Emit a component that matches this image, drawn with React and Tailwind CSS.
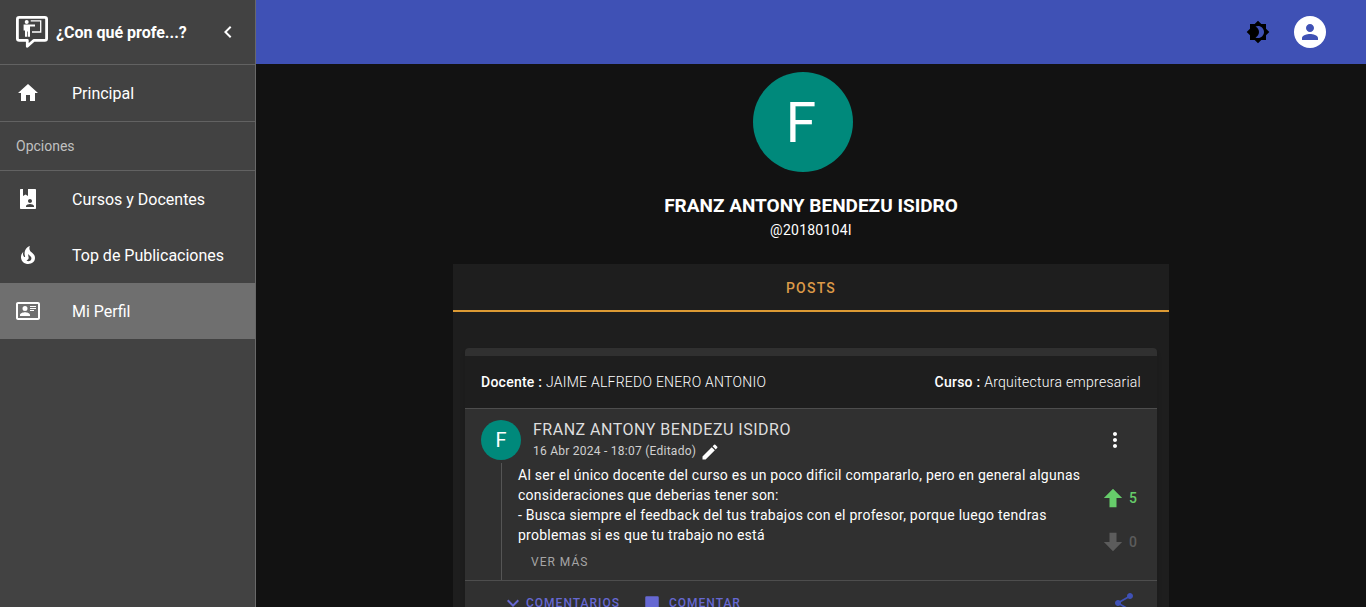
import { MdHome, MdBrightness4, MdPerson, MdEdit, MdMoreVert, MdShare, MdChevronLeft } from "react-icons/md";

function Icon({ d, className }) {
  return (
    <svg viewBox="0 0 24 24" fill="currentColor" aria-hidden="true" className={className}>
      <path d={d} />
    </svg>
  );
}

const bookAccount =
  "M19 2H12V9L9.5 7.5L7 9V2H5C4.4 2 4 2.4 4 3V21C4 21.6 4.4 22 5 22H19C19.6 22 20 21.6 20 21V3C20 2.4 19.6 2 19 2M14 12C15.1 12 16 12.9 16 14S15.1 16 14 16 12 15.1 12 14 12.9 12 14 12M18 20H10V19C10 17.67 12.67 17 14 17S18 17.67 18 19V20Z";
const cardAccount =
  "M22 3H2C.91 3.04.04 3.91 0 5V19C.04 20.09.91 20.96 2 21H22C23.09 20.96 23.96 20.09 24 19V5C23.96 3.91 23.09 3.04 22 3M22 19H2V5H22V19M14 17V15.75C14 14.09 10.66 13.25 9 13.25S4 14.09 4 15.75V17H14M9 7A2.5 2.5 0 1 0 9 12A2.5 2.5 0 0 0 9 7M14 7V8H20V7H14M14 9V10H20V9H14M14 11V12H18V11H14Z";
const fire =
  "M17.66 11.2C17.43 10.9 17.15 10.64 16.89 10.38C16.22 9.78 15.46 9.35 14.82 8.72C13.33 7.26 13 4.85 13.95 3C13 3.23 12.17 3.75 11.46 4.32C8.87 6.4 7.85 10.07 9.07 13.22C9.11 13.32 9.15 13.42 9.15 13.55C9.15 13.77 9 13.97 8.8 14.05C8.57 14.15 8.33 14.09 8.14 13.93C8.08 13.88 8.04 13.83 8 13.76C6.87 12.33 6.69 10.28 7.45 8.64C5.78 10 4.87 12.3 5 14.47C5.06 14.97 5.12 15.47 5.29 15.97C5.43 16.57 5.7 17.17 6 17.7C7.08 19.43 8.95 20.67 10.96 20.92C13.1 21.19 15.39 20.8 17.03 19.32C18.86 17.66 19.5 15 18.56 12.72L18.43 12.46C18.22 12 17.66 11.2 17.66 11.2M14.5 17.5C14.22 17.74 13.76 18 13.4 18.1C12.28 18.5 11.16 17.94 10.5 17.28C11.69 17 12.4 16.12 12.61 15.23C12.78 14.43 12.46 13.77 12.33 13C12.21 12.26 12.23 11.63 12.5 10.94C12.69 11.32 12.89 11.7 13.13 12C13.9 13 15.11 13.44 15.37 14.8C15.41 14.94 15.43 15.08 15.43 15.23C15.46 16.05 15.1 16.95 14.5 17.5Z";
const arrowUp = "M15 20H9V12H4.16L12 4.16L19.84 12H15V20Z";
const arrowDown = "M9 4H15V12H19.84L12 19.84L4.16 12H9V4Z";
const chevronDown = "M7.41 8.58L12 13.17L16.59 8.58L18 10L12 16L6 10L7.41 8.58Z";
const message = "M4.5 3H19.5A1.5 1.5 0 0 1 21 4.5V22L17 18H4.5A1.5 1.5 0 0 1 3 16.5V4.5A1.5 1.5 0 0 1 4.5 3Z";

function Logo() {
  return (
    <svg viewBox="0 0 32 32" fill="none" aria-hidden="true" className="size-8 shrink-0 text-white">
      <path d="M3.2 1.4H28.8A1.8 1.8 0 0 1 30.6 3.2V22.5A1.8 1.8 0 0 1 28.8 24.3H18L11.3 30.3V24.3H3.2A1.8 1.8 0 0 1 1.4 22.5V3.2A1.8 1.8 0 0 1 3.2 1.4Z" stroke="currentColor" strokeWidth="2.8" strokeLinejoin="round" />
      <circle cx="10.7" cy="6" r="2" fill="currentColor" />
      <path d="M7.6 8.6H19V10.4H14V20.8H11.8V15.5H11.1V20.8H9V14.5H7.6Z" fill="currentColor" />
      <path d="M14.7 4.8H24.7V16H16" stroke="currentColor" strokeWidth="1.3" />
    </svg>
  );
}

function NavItem({ icon, label, active }) {
  return (
    <a href="#" className={`flex h-14 items-center gap-8 px-4 text-base text-white ${active ? "bg-[#6f6f6f]" : ""}`}>
      {icon}
      <span className="pt-0.5">{label}</span>
    </a>
  );
}

function Sidebar() {
  return (
    <aside className="w-64 shrink-0 border-r border-[#686868] bg-[#424242]">
      <div className="flex h-16 items-center gap-2 pr-[15px] pl-4 text-white">
        <Logo />
        <span className="flex-1 pt-0.5 text-base font-bold">¿Con qué profe...?</span>
        <button aria-label="Contraer menú"><MdChevronLeft className="size-6" /></button>
      </div>
      <nav>
        <div className="border-y border-[#626262]">
          <NavItem icon={<MdHome className="size-6" />} label="Principal" />
        </div>
        <h2 className="flex h-12 items-center px-4 text-sm text-[#c0c0c0]">Opciones</h2>
        <div className="border-t border-[#626262]">
          <NavItem icon={<Icon d={bookAccount} className="size-6" />} label="Cursos y Docentes" />
          <NavItem icon={<Icon d={fire} className="size-6" />} label="Top de Publicaciones" />
          <NavItem icon={<Icon d={cardAccount} className="size-6" />} label="Mi Perfil" active />
        </div>
      </nav>
    </aside>
  );
}

function Post() {
  return (
    <article className="overflow-hidden rounded-t bg-[#303030] pt-2 shadow-md">
      <div className="flex h-13 items-center justify-between bg-[#1e1e1e] px-4 text-sm font-light tracking-[0.25px] text-white">
        <p><span className="font-medium">Docente :</span> JAIME ALFREDO ENERO ANTONIO</p>
        <p><span className="font-medium">Curso :</span> Arquitectura empresarial</p>
      </div>
      <div className="flex border-y border-[#4d4d4d] pl-4">
        <div className="min-w-0 flex-1">
          <header className="flex gap-3 pt-[11px]">
            <span className="flex size-10 shrink-0 items-center justify-center rounded-full bg-[#00897b] text-xl text-white">F</span>
            <div>
              <h2 className="text-base leading-[19px] tracking-[0.5px] text-[#dedede]">FRANZ ANTONY BENDEZU ISIDRO</h2>
              <p className="flex h-6 items-center gap-1 text-xs tracking-[0.25px] text-[#d0d0d0]">
                16 Abr 2024 - 18:07 (Editado)
                <button aria-label="Editar" className="pt-0.5 text-white"><MdEdit className="size-5" /></button>
              </p>
            </div>
          </header>
          <div className="ml-5 border-l border-[#555] py-0.5 pl-4">
            <p className="text-sm leading-5 tracking-[0.25px] text-white">
              Al ser el único docente del curso es un poco dificil compararlo, pero en general algunas consideraciones que deberias tener son:<br />
              - Busca siempre el feedback del tus trabajos con el profesor, porque luego tendras problemas si es que tu trabajo no está
            </p>
            <button className="flex h-[33px] items-center px-[13px] text-xs tracking-[1px] text-[#a5a5a5]">VER MÁS</button>
          </div>
        </div>
        <div className="flex w-[58px] shrink-0 flex-col items-start pt-[19px] text-sm font-medium">
          <button aria-label="Más opciones" className="ml-1 text-white"><MdMoreVert className="size-6" /></button>
          <button className="mt-8 flex items-center gap-0.5 text-[#66cc6a]"><Icon d={arrowUp} className="size-7" />5</button>
          <button className="mt-4 flex items-center gap-0.5 text-[#5c5c5c]"><Icon d={arrowDown} className="size-7" />0</button>
        </div>
      </div>
      <footer className="flex h-11 items-center pr-[21px] pl-9 text-xs font-medium tracking-[1px] text-[#6668d2]">
        <button className="flex items-center gap-px"><Icon d={chevronDown} className="size-6" />COMENTARIOS</button>
        <button className="ml-[23px] flex items-center gap-2"><Icon d={message} className="size-[18px]" />COMENTAR</button>
        <button aria-label="Compartir" className="ml-auto text-[#3f51b5]"><MdShare className="size-6" /></button>
      </footer>
    </article>
  );
}

export default function App() {
  return (
    <div className="flex h-screen overflow-hidden bg-[#121212] font-['Roboto',sans-serif]">
      <Sidebar />
      <div className="flex min-w-0 flex-1 flex-col">
        <header className="flex h-16 shrink-0 items-center justify-end gap-6 bg-[#3f51b5] pr-10">
          <button aria-label="Cambiar tema" className="text-black"><MdBrightness4 className="size-6" /></button>
          <button aria-label="Cuenta" className="flex size-8 items-center justify-center rounded-full bg-white text-[#3f51b5]"><MdPerson className="size-6" /></button>
        </header>
        <main className="min-h-0 flex-1 overflow-hidden pt-2">
          <section className="flex flex-col items-center text-white">
            <span className="mr-4 flex size-[100px] items-center justify-center rounded-full bg-[#00897b] pt-0.5 pr-1 text-[55px]">F</span>
            <h1 className="mt-5 text-[19px] leading-7 font-bold">FRANZ ANTONY BENDEZU ISIDRO</h1>
            <p className="text-sm leading-5 tracking-[0.25px]">@20180104I</p>
          </section>
          <div className="mx-auto mt-6 w-2/3 px-3">
            <section className="bg-[#1e1e1e]">
              <div role="tablist" className="flex border-b-2 border-[#dc9a34]">
                <button role="tab" aria-selected="true" className="h-[46px] flex-1 pt-0.5 text-sm font-medium tracking-[1.25px] text-[#dc9a48]">POSTS</button>
              </div>
              <div className="px-3 pt-9"><Post /></div>
            </section>
          </div>
        </main>
      </div>
    </div>
  );
}
